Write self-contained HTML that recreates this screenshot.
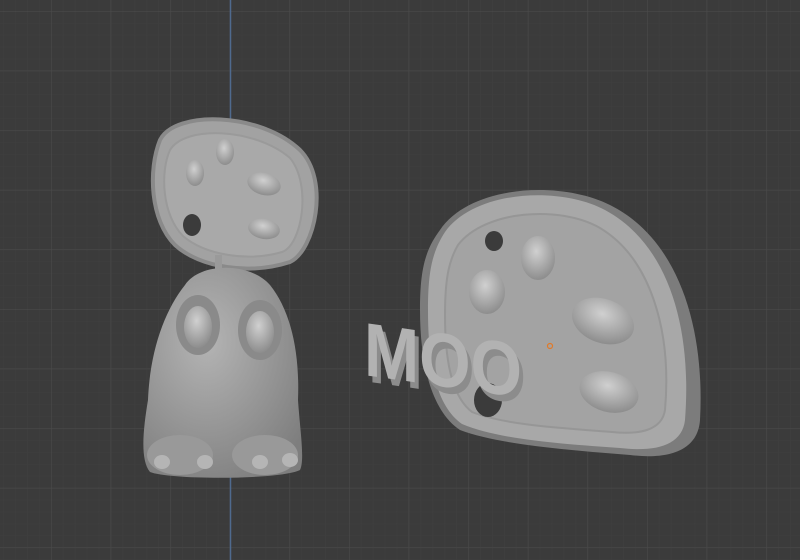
<!DOCTYPE html>
<html><head><meta charset="utf-8"><style>
html,body{margin:0;padding:0;width:800px;height:560px;overflow:hidden;background:#3b3b3b}
</style></head><body>
<svg width="800" height="560" viewBox="0 0 800 560" xmlns="http://www.w3.org/2000/svg">
<defs>
<pattern id="fine" x="-8.6" y="-0.9" width="11.92" height="11.92" patternUnits="userSpaceOnUse">
<path d="M0 0H11.92M0 0V11.92" stroke="#3f3f3f" stroke-width="1"/>
</pattern>
<pattern id="major" x="-8.6" y="11" width="59.6" height="59.6" patternUnits="userSpaceOnUse">
<path d="M0 0H59.6M0 0V59.6" stroke="#4a4a4a" stroke-width="1.2"/>
</pattern>
<radialGradient id="g1" cx="40%" cy="35%" r="75%"><stop offset="0" stop-color="#b4b4b4"/><stop offset="1" stop-color="#7e7e7e"/></radialGradient>
<radialGradient id="g2" cx="45%" cy="35%" r="70%"><stop offset="0" stop-color="#d0d0d0"/><stop offset="1" stop-color="#888"/></radialGradient>
</defs>
<rect width="800" height="560" fill="#3b3b3b"/>
<rect width="800" height="560" fill="url(#fine)"/>
<rect width="800" height="560" fill="url(#major)"/>
<line x1="230.5" y1="0" x2="230.5" y2="560" stroke="#4f6a8e" stroke-width="1.5"/>

<!-- left paddle -->
<path d="M160 140 C175 110 260 112 300 150 C330 180 315 250 290 262 C250 275 200 268 175 245 C150 220 148 170 160 140Z" fill="#a2a2a2" stroke="#8a8a8a" stroke-width="4"/>
<path d="M170 150 C185 125 255 128 290 158 C312 185 302 245 282 252 C248 262 205 255 183 236 C162 215 160 172 170 150Z" fill="#a9a9a9" stroke="#9a9a9a" stroke-width="2"/>
<ellipse cx="225" cy="152" rx="9" ry="13" fill="url(#g2)"/>
<ellipse cx="195" cy="173" rx="9" ry="13" fill="url(#g2)"/>
<ellipse cx="264" cy="184" rx="17" ry="11" fill="url(#g2)" transform="rotate(15 264 184)"/>
<ellipse cx="264" cy="229" rx="16" ry="10" fill="url(#g2)" transform="rotate(10 264 229)"/>
<ellipse cx="192" cy="225" rx="9" ry="11" fill="#3b3b3b"/>
<rect x="215" y="255" width="7" height="22" fill="#9a9a9a"/>

<!-- left body -->
<path d="M185 285 C200 262 250 262 270 285 C290 310 300 350 298 400 C300 430 305 460 300 470 C280 480 170 480 150 472 C140 460 143 430 148 400 C150 350 165 310 185 285Z" fill="url(#g1)"/>
<ellipse cx="198" cy="325" rx="22" ry="30" fill="#8a8a8a"/>
<ellipse cx="198" cy="327" rx="14" ry="21" fill="url(#g2)"/>
<ellipse cx="260" cy="330" rx="22" ry="30" fill="#8a8a8a"/>
<ellipse cx="260" cy="332" rx="14" ry="21" fill="url(#g2)"/>
<ellipse cx="180" cy="455" rx="33" ry="20" fill="#999"/>
<ellipse cx="265" cy="455" rx="33" ry="20" fill="#999"/>
<ellipse cx="162" cy="462" rx="8" ry="7" fill="#b5b5b5"/>
<ellipse cx="205" cy="462" rx="8" ry="7" fill="#b5b5b5"/>
<ellipse cx="260" cy="462" rx="8" ry="7" fill="#b5b5b5"/>
<ellipse cx="290" cy="460" rx="8" ry="7" fill="#b5b5b5"/>

<!-- right paddle -->
<path d="M440 230 C470 185 560 180 610 205 C680 240 705 330 700 420 C698 450 670 460 630 455 C570 450 500 445 460 430 C430 410 420 360 420 310 C420 270 425 250 440 230Z" fill="#7c7c7c"/>
<path d="M445 232 C475 190 560 186 605 210 C670 245 692 330 685 420 C682 446 655 452 620 448 C565 444 500 440 462 424 C435 405 428 360 428 310 C428 272 432 252 445 232Z" fill="#a8a8a8"/>
<path d="M458 245 C485 210 560 205 600 228 C650 258 672 330 665 410 C662 430 640 435 612 432 C560 428 505 425 472 412 C450 395 445 355 445 315 C445 282 448 262 458 245Z" fill="#a3a3a3" stroke="#969696" stroke-width="2"/>
<ellipse cx="494" cy="241" rx="9" ry="10" fill="#3b3b3b"/>
<ellipse cx="538" cy="258" rx="17" ry="22" fill="url(#g2)"/>
<ellipse cx="487" cy="292" rx="18" ry="22" fill="url(#g2)"/>
<ellipse cx="603" cy="321" rx="32" ry="22" fill="url(#g2)" transform="rotate(20 603 321)"/>
<ellipse cx="609" cy="392" rx="30" ry="20" fill="url(#g2)" transform="rotate(15 609 392)"/>
<ellipse cx="488" cy="400" rx="14" ry="17" fill="#3b3b3b"/>
<circle cx="550" cy="346" r="2.5" fill="none" stroke="#e07a2a" stroke-width="1.2"/>

<!-- MOO -->
<text x="368" y="388" font-family="Liberation Sans, sans-serif" font-weight="bold" font-size="76" fill="#8c8c8c" textLength="158" lengthAdjust="spacingAndGlyphs" transform="skewY(8) translate(0,-58)">MOO</text>
<text x="364" y="382" font-family="Liberation Sans, sans-serif" font-weight="bold" font-size="76" fill="#b2b2b2" textLength="158" lengthAdjust="spacingAndGlyphs" transform="skewY(8) translate(0,-58)">MOO</text>
</svg>
</body></html>
